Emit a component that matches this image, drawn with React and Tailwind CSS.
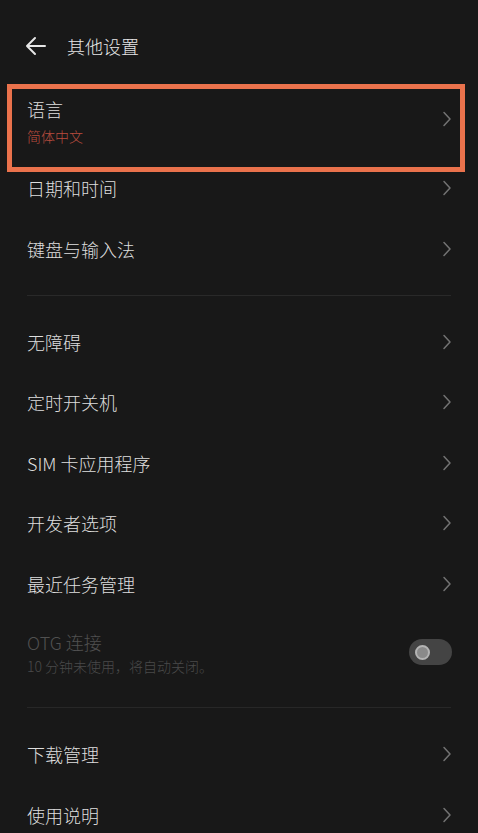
import React from "react";

const font = { fontFamily: '"Noto Sans CJK SC", "Noto Sans", sans-serif' };

function Chevron() {
  return (
    <svg width="10" height="16" viewBox="0 0 10 16" fill="none" className="shrink-0">
      <path d="M2 1.5 L8 8 L2 14.5" stroke="#727272" strokeWidth="1.5" strokeLinecap="round" strokeLinejoin="round" />
    </svg>
  );
}

function Row({ label, className = "h-[60.5px]" }) {
  return (
    <div className={`flex items-center justify-between pl-[27px] pr-[26px] ${className}`}>
      <span className="text-[18px] leading-[24px] font-light text-[#dedede]">{label}</span>
      <Chevron />
    </div>
  );
}

export default function App() {
  return (
    <div className="w-[478px] h-[833px] overflow-hidden bg-[#181818]" style={font}>
      {/* header */}
      <div className="h-[84px] flex items-start pt-[34px] pl-[25px]">
        <svg width="22" height="24" viewBox="0 0 22 24" fill="none">
          <path d="M2 12 H20 M10 4 L2 12 L10 20" stroke="#e6e6e6" strokeWidth="2" strokeLinecap="round" strokeLinejoin="round" />
        </svg>
        <span className="ml-[20px] text-[18px] leading-[24px] font-light text-[#e6e6e6]">其他设置</span>
      </div>

      {/* highlighted language row */}
      <div className="ml-[7px] w-[458px] h-[88px] border-[5px] border-[#ea724c] flex items-start justify-between pl-[15px] pr-[8px]">
        <div className="flex flex-col pt-[8px]">
          <span className="text-[18px] leading-[24px] font-light text-[#dedede]">语言</span>
          <span className="text-[14px] leading-[20px] mt-[5px] font-light text-[#b94c3e]">简体中文</span>
        </div>
        <div className="pt-[22px]">
          <Chevron />
        </div>
      </div>

      <Row label="日期和时间" className="h-[32px]" />
      <Row label="键盘与输入法" className="mt-[14px] h-[61px]" />

      <div className="mt-[16px] mx-[27px] h-px bg-[#292929]" />

      <div className="pt-[15.5px]">
        <Row label="无障碍" />
        <Row label="定时开关机" />
        <Row label="SIM 卡应用程序" />
        <Row label="开发者选项" />
        <Row label="最近任务管理" />

        {/* OTG */}
        <div className="h-[76px] flex items-start justify-between pl-[27px] pr-[26px]">
          <div className="flex flex-col pt-[16px]">
            <span className="text-[18px] leading-[24px] font-light text-[#505050]">OTG 连接</span>
            <span className="text-[14px] leading-[20px] mt-[2px] font-light text-[#4a4a4a]">10 分钟未使用，将自动关闭。</span>
          </div>
          <div className="mt-[25px] w-[43px] h-[26px] rounded-full bg-[#444444] flex items-center pl-[6px]">
            <div className="w-[15px] h-[15px] rounded-full bg-[#8a8a8a] border-[2px] border-[#b4b4b4]" />
          </div>
        </div>

        <div className="mt-[17px] mx-[27px] h-px bg-[#272727]" />

        <div className="pt-[16px]">
          <Row label="下载管理" />
          <Row label="使用说明" />
        </div>
      </div>
    </div>
  );
}
